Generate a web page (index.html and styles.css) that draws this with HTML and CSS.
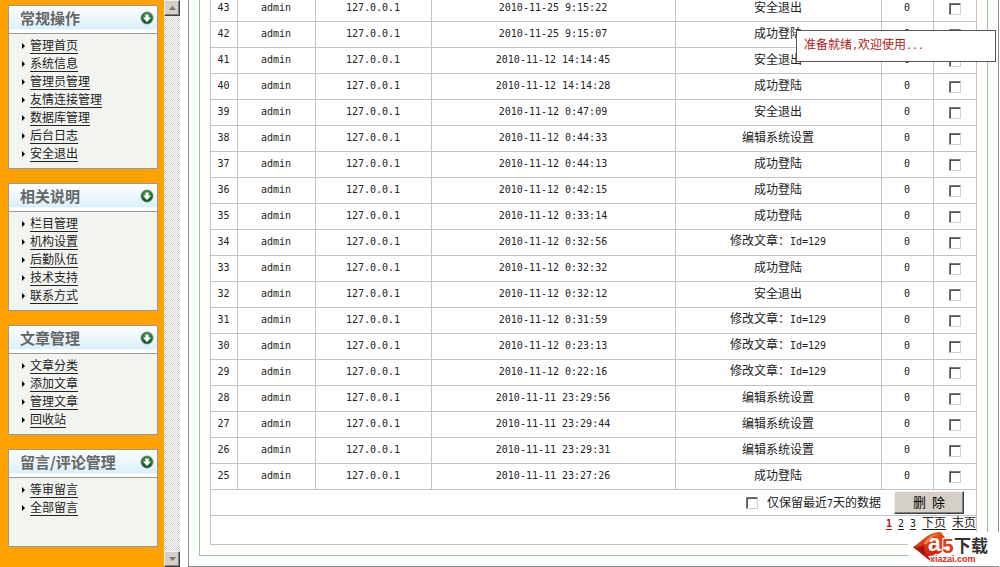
FILE: index.html
```
<!DOCTYPE html>
<html lang="zh-CN">
<head>
    <meta charset="UTF-8">
    <meta name="viewport" content="width=device-width, initial-scale=1.0">
    <title>后台日志</title>
    <link rel="stylesheet" href="styles.css">
</head>
<body>
<svg width="0" height="0" class="defs">
  <defs>
    <radialGradient id="ball" cx="50%" cy="35%" r="65%">
      <stop offset="0" stop-color="#4fb04f"/>
      <stop offset="1" stop-color="#0c4a22"/>
    </radialGradient>
    <linearGradient id="flame" x1="0" y1="0" x2="0" y2="1">
      <stop offset="0" stop-color="#e8501c"/>
      <stop offset="1" stop-color="#c41a12"/>
    </linearGradient>
    <symbol id="down" viewBox="0 0 14 14">
      <circle cx="7" cy="7" r="6.5" fill="#8a9a8a"/>
      <circle cx="7" cy="7" r="5.7" fill="url(#ball)"/>
      <path d="M5.500 3l1.500 1 1.500-1v3.500h2.500L7 11 3 6.500h2.500z" fill="#fff"/>
    </symbol>
  </defs>
</svg>

<nav class="sidebar">
  <div class="panel">
    <h2>常规操作 <svg><use href="#down"/></svg></h2>
    <ul>
      <li><a href="#">管理首页</a></li>
      <li><a href="#">系统信息</a></li>
      <li><a href="#">管理员管理</a></li>
      <li><a href="#">友情连接管理</a></li>
      <li><a href="#">数据库管理</a></li>
      <li><a href="#">后台日志</a></li>
      <li><a href="#">安全退出</a></li>
    </ul>
  </div>
  <div class="panel">
    <h2>相关说明 <svg><use href="#down"/></svg></h2>
    <ul>
      <li><a href="#">栏目管理</a></li>
      <li><a href="#">机构设置</a></li>
      <li><a href="#">后勤队伍</a></li>
      <li><a href="#">技术支持</a></li>
      <li><a href="#">联系方式</a></li>
    </ul>
  </div>
  <div class="panel">
    <h2>文章管理 <svg><use href="#down"/></svg></h2>
    <ul>
      <li><a href="#">文章分类</a></li>
      <li><a href="#">添加文章</a></li>
      <li><a href="#">管理文章</a></li>
      <li><a href="#">回收站</a></li>
    </ul>
  </div>
  <div class="panel">
    <h2>留言/评论管理 <svg><use href="#down"/></svg></h2>
    <ul>
      <li><a href="#">等审留言</a></li>
      <li><a href="#">全部留言</a></li>
    </ul>
  </div>
</nav>

<div class="scrollbar">
  <button type="button" aria-label="向上滚动"><svg viewBox="0 0 7 4"><path d="M0 4L3.500 0 7 4z"/></svg></button>
  <button type="button" aria-label="向下滚动"><svg viewBox="0 0 7 4"><path d="M0 0h7L3.500 4z"/></svg></button>
</div>

<main class="main">
  <div class="outer">
    <div class="inner">
      <table>
        <colgroup>
          <col class="c-id"><col class="c-user"><col class="c-ip"><col><col class="c-act"><col class="c-num"><col class="c-box">
        </colgroup>
        <tbody>
          <tr><td>43</td><td>admin</td><td>127.0.0.1</td><td>2010-11-25 9:15:22</td><td class="cn">安全退出</td><td>0</td><td><input type="checkbox" aria-label="43"></td></tr>
          <tr><td>42</td><td>admin</td><td>127.0.0.1</td><td>2010-11-25 9:15:07</td><td class="cn">成功登陆</td><td>0</td><td><input type="checkbox" aria-label="42"></td></tr>
          <tr><td>41</td><td>admin</td><td>127.0.0.1</td><td>2010-11-12 14:14:45</td><td class="cn">安全退出</td><td>0</td><td><input type="checkbox" aria-label="41"></td></tr>
          <tr><td>40</td><td>admin</td><td>127.0.0.1</td><td>2010-11-12 14:14:28</td><td class="cn">成功登陆</td><td>0</td><td><input type="checkbox" aria-label="40"></td></tr>
          <tr><td>39</td><td>admin</td><td>127.0.0.1</td><td>2010-11-12 0:47:09</td><td class="cn">安全退出</td><td>0</td><td><input type="checkbox" aria-label="39"></td></tr>
          <tr><td>38</td><td>admin</td><td>127.0.0.1</td><td>2010-11-12 0:44:33</td><td class="cn">编辑系统设置</td><td>0</td><td><input type="checkbox" aria-label="38"></td></tr>
          <tr><td>37</td><td>admin</td><td>127.0.0.1</td><td>2010-11-12 0:44:13</td><td class="cn">成功登陆</td><td>0</td><td><input type="checkbox" aria-label="37"></td></tr>
          <tr><td>36</td><td>admin</td><td>127.0.0.1</td><td>2010-11-12 0:42:15</td><td class="cn">成功登陆</td><td>0</td><td><input type="checkbox" aria-label="36"></td></tr>
          <tr><td>35</td><td>admin</td><td>127.0.0.1</td><td>2010-11-12 0:33:14</td><td class="cn">成功登陆</td><td>0</td><td><input type="checkbox" aria-label="35"></td></tr>
          <tr><td>34</td><td>admin</td><td>127.0.0.1</td><td>2010-11-12 0:32:56</td><td class="cn">修改文章：<span>Id=129</span></td><td>0</td><td><input type="checkbox" aria-label="34"></td></tr>
          <tr><td>33</td><td>admin</td><td>127.0.0.1</td><td>2010-11-12 0:32:32</td><td class="cn">成功登陆</td><td>0</td><td><input type="checkbox" aria-label="33"></td></tr>
          <tr><td>32</td><td>admin</td><td>127.0.0.1</td><td>2010-11-12 0:32:12</td><td class="cn">安全退出</td><td>0</td><td><input type="checkbox" aria-label="32"></td></tr>
          <tr><td>31</td><td>admin</td><td>127.0.0.1</td><td>2010-11-12 0:31:59</td><td class="cn">修改文章：<span>Id=129</span></td><td>0</td><td><input type="checkbox" aria-label="31"></td></tr>
          <tr><td>30</td><td>admin</td><td>127.0.0.1</td><td>2010-11-12 0:23:13</td><td class="cn">修改文章：<span>Id=129</span></td><td>0</td><td><input type="checkbox" aria-label="30"></td></tr>
          <tr><td>29</td><td>admin</td><td>127.0.0.1</td><td>2010-11-12 0:22:16</td><td class="cn">修改文章：<span>Id=129</span></td><td>0</td><td><input type="checkbox" aria-label="29"></td></tr>
          <tr><td>28</td><td>admin</td><td>127.0.0.1</td><td>2010-11-11 23:29:56</td><td class="cn">编辑系统设置</td><td>0</td><td><input type="checkbox" aria-label="28"></td></tr>
          <tr><td>27</td><td>admin</td><td>127.0.0.1</td><td>2010-11-11 23:29:44</td><td class="cn">编辑系统设置</td><td>0</td><td><input type="checkbox" aria-label="27"></td></tr>
          <tr><td>26</td><td>admin</td><td>127.0.0.1</td><td>2010-11-11 23:29:31</td><td class="cn">编辑系统设置</td><td>0</td><td><input type="checkbox" aria-label="26"></td></tr>
          <tr><td>25</td><td>admin</td><td>127.0.0.1</td><td>2010-11-11 23:27:26</td><td class="cn">成功登陆</td><td>0</td><td><input type="checkbox" aria-label="25"></td></tr>
        </tbody>
        <tfoot>
          <tr class="tools">
            <td colspan="7">
              <div class="actions">
                <input type="checkbox" id="keep">
                <label for="keep">仅保留最近<span>7</span>天的数据</label>
                <button type="button">删&nbsp;&nbsp;除</button>
              </div>
            </td>
          </tr>
          <tr class="pages">
            <td colspan="7">
              <div class="pager">
                <a href="#" class="on">1</a>
                <a href="#">2</a>
                <a href="#">3</a>
                <a href="#" class="cn">下页</a>
                <a href="#" class="cn">末页</a>
              </div>
            </td>
          </tr>
        </tfoot>
      </table>
    </div>
  </div>
</main>

<div class="message">准备就绪<span>,</span>欢迎使用<span>...</span></div>

<a href="#" class="logo" aria-label="a5下载">
  <svg viewBox="0 0 92 34">
    <path d="M5 15C13 11 18 1 31 0c3 0 4 1 3 2 3 2 4 7 3 11-1 5-4 8-8 10l-8 1 3 6C17 25 12 20 5 15z" fill="url(#flame)"/>
    <path d="M5 15c5 1 8 0 11-2 0 6 2 12 8 17C17 25 12 20 5 15z" fill="#a81410"/>
    <path d="M16 12C18 6 24 2 32 2c-7 2-11 5-13 10z" fill="#f08a50"/>
    <text x="20" y="19" class="logo-a">a</text>
    <text x="34" y="21" class="logo-5">5</text>
    <text x="46" y="20" class="logo-cn">下载</text>
    <text x="22" y="30" class="logo-url">xiazai.com</text>
  </svg>
</a>
</body>
</html>
```
FILE: styles.css
```
* {
  box-sizing: border-box;
}
body {
  margin: 0;
  display: flex;
  height: 100vh;
  overflow: hidden;
  background: #fff;
  color: #222;
  font-family: "Noto Sans CJK SC", sans-serif;
  font-size: 12px;
}
a {
  color: #222;
}
.defs {
  position: absolute;
}

/* left menu */
.sidebar {
  flex: none;
  width: 164px;
  padding: 5px 6px 0 8px;
  display: flex;
  flex-direction: column;
  gap: 14px;
  background: #ffa200;
}
.panel {
  border: 1px solid #999;
  background: #f2f4f0;
}
.panel h2 {
  display: flex;
  align-items: center;
  justify-content: space-between;
  height: 28px;
  margin: 0;
  padding: 0 3px 3px 11px;
  border-bottom: 1px solid #999;
  background: linear-gradient(#fff 0%, #d9effb 85%, #fff 88%);
  color: #666;
  font-size: 15px;
  line-height: 22px;
}
.panel h2 svg {
  width: 14px;
  height: 14px;
}
.panel ul {
  margin: 0;
  padding: 3px 0 5px 13px;
  list-style: none;
}
.panel:last-child ul {
  min-height: 68px;
}
.panel li {
  display: flex;
  align-items: center;
  gap: 5px;
  height: 18px;
}
.panel li::before {
  content: "";
  border: 3px solid transparent;
  border-left-color: #000;
  border-right: 0;
}
.panel a {
  line-height: 16px;
  padding-bottom: 2px;
  text-underline-offset: 3px;
}

/* frame scrollbar */
.scrollbar {
  flex: none;
  width: 16px;
  display: flex;
  flex-direction: column;
  justify-content: space-between;
  background: repeating-conic-gradient(#fff 0 25%, #d4d0c8 0 50%) 0 0 / 2px 2px;
}
.scrollbar button {
  display: flex;
  align-items: center;
  justify-content: center;
  height: 16px;
  padding: 0;
  border: 1px solid;
  border-color: #f4f2ee #404040 #404040 #f4f2ee;
  box-shadow: inset -1px -1px #808080;
  background: #d4d0c8;
}
.scrollbar svg {
  width: 7px;
  height: 4px;
  fill: #777;
}

/* log list */
.main {
  flex: 1;
  min-width: 0;
  padding: 0 1px 0 8px;
}
.outer {
  padding: 0 10px 10px;
  border: 1px solid #8c8c90;
  border-top: 0;
  background: #fafffd;
}
.inner {
  padding: 0 10px 10px;
  border: 1px solid #9cc0ac;
  border-top: 0;
  background: #fffdfa;
}
table {
  width: 100%;
  margin-top: -5px;
  table-layout: fixed;
  border-collapse: collapse;
  background: #fff;
}
.c-id { width: 27px; }
.c-user { width: 78px; }
.c-ip { width: 116px; }
.c-act { width: 206px; }
.c-num { width: 52px; }
.c-box { width: 43px; }
td {
  height: 26px;
  padding: 0 1px 2px 0;
  border: 1px solid #c3c3c3;
  text-align: center;
  line-height: 16px;
}
td:last-child {
  padding: 0;
}
td, td span, label span, .pager, .message span {
  font-family: "DejaVu Sans Mono", monospace;
  font-size: 10px;
}
.cn, label {
  font-family: "Noto Sans CJK SC", sans-serif;
  font-size: 12px;
}
td.cn {
  padding-bottom: 4px;
}
input[type="checkbox"] {
  appearance: none;
  display: block;
  width: 12px;
  height: 12px;
  margin: 0 auto;
  border: 1px solid;
  border-color: #777 #d4d0c8 #d4d0c8 #777;
  box-shadow: inset 1px 1px #555;
  background: #fff;
}
.tools td {
  vertical-align: top;
}
.actions {
  display: flex;
  align-items: center;
  justify-content: flex-end;
  height: 25px;
  padding-right: 12px;
}
.actions input[type="checkbox"] {
  margin: 0 9px 0 0;
}
.actions button {
  width: 70px;
  height: 23px;
  margin-left: 13px;
  padding: 0 0 2px;
  border: 1px solid;
  border-color: #f4f2ee #404040 #404040 #f4f2ee;
  box-shadow: inset -1px -1px #808080;
  background: #d4d0c8;
  color: #000;
  font-family: "Noto Sans CJK SC", sans-serif;
  font-size: 13px;
  line-height: 18px;
}
.pages td {
  height: 29px;
  vertical-align: top;
}
.pager {
  display: flex;
  justify-content: flex-end;
  align-items: baseline;
  gap: 6px;
  line-height: 11px;
}
.pager a {
  text-underline-offset: 2px;
}
.pager .on {
  color: #b01010;
  font-weight: bold;
}

.message {
  position: absolute;
  top: 30px;
  right: 4px;
  width: 200px;
  height: 32px;
  padding: 3px 7px;
  border: 1px solid #555;
  background: #fff;
  color: #b01818;
  line-height: 20px;
}

.logo {
  position: absolute;
  right: 0;
  bottom: 1px;
  width: 92px;
  height: 34px;
  background: #fff;
}
.logo svg {
  display: block;
}
.logo text {
  font-family: "Liberation Sans", sans-serif;
  font-weight: bold;
}
.logo .logo-a {
  fill: #fff;
  font-size: 23px;
}
.logo .logo-5 {
  fill: #dc3a1a;
  stroke: #fff;
  stroke-width: 2px;
  paint-order: stroke;
  font-size: 21px;
}
.logo .logo-cn {
  fill: #333;
  font-family: "Noto Sans CJK SC", sans-serif;
  font-size: 17px;
}
.logo .logo-url {
  fill: #d42a16;
  stroke: #fff;
  stroke-width: 2px;
  paint-order: stroke;
  font-size: 9px;
}
```
